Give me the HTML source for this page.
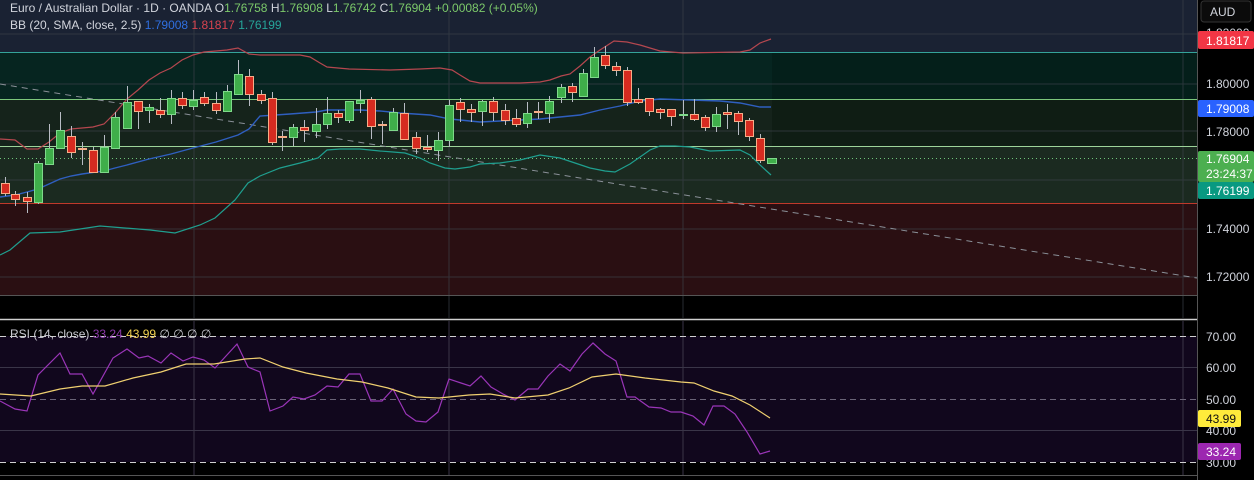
<!DOCTYPE html>
<html><head><meta charset="utf-8"><style>
html,body{margin:0;padding:0;background:#000;width:1254px;height:480px;overflow:hidden}
svg{display:block}
text{font-family:"Liberation Sans",sans-serif;font-size:12px}
</style></head><body>
<svg width="1254" height="480" viewBox="0 0 1254 480" xmlns="http://www.w3.org/2000/svg">
<!-- main pane backgrounds -->
<rect x="0" y="0" width="1197" height="318" fill="#000"/>
<rect x="0" y="0" width="1197" height="52" fill="#1a2233"/>
<rect x="0" y="52" width="772" height="47" fill="#062520"/>
<rect x="772" y="52" width="425" height="47" fill="#041f1a"/>
<rect x="0" y="99" width="772" height="47" fill="#15231b"/>
<rect x="772" y="99" width="425" height="47" fill="#0f1d14"/>
<rect x="0" y="146" width="1197" height="57" fill="#1b2a20"/>
<rect x="0" y="203" width="1197" height="92" fill="#2a0f12"/>
<!-- grid -->
<g stroke="#3a4048" stroke-width="1" opacity="0.7">
<line x1="0" y1="84" x2="1197" y2="84"/><line x1="0" y1="131" x2="1197" y2="131"/>
<line x1="0" y1="180" x2="1197" y2="180"/><line x1="0" y1="229" x2="1197" y2="229"/>
<line x1="0" y1="277" x2="1197" y2="277"/><line x1="0" y1="34" x2="1197" y2="34"/>
<line x1="194" y1="0" x2="194" y2="318"/><line x1="449" y1="0" x2="449" y2="318"/>
<line x1="683" y1="0" x2="683" y2="318"/><line x1="1183" y1="0" x2="1183" y2="318"/>
</g>
<!-- zone lines -->
<line x1="0" y1="52.5" x2="1197" y2="52.5" stroke="#34a39a"/>
<line x1="0" y1="99.5" x2="1197" y2="99.5" stroke="#7cc77c"/>
<line x1="0" y1="146.5" x2="1197" y2="146.5" stroke="#9dd49a"/>
<line x1="0" y1="203.5" x2="1197" y2="203.5" stroke="#c0392b"/>
<line x1="0" y1="295.5" x2="1197" y2="295.5" stroke="#555"/>
<line x1="0" y1="158.5" x2="1197" y2="158.5" stroke="#6fc47a" stroke-dasharray="1 3"/>
<!-- trend line -->
<line x1="0" y1="84" x2="1197" y2="278" stroke="#8a9098" stroke-width="1" stroke-dasharray="6 5"/>
<!-- BB -->
<polyline fill="none" stroke="#b5474f" stroke-width="1.2" points="0,139 15,140 27,149 38,149 49,142 60,133 71,129 82,128 93,127 104,124 115,113 127,99 138,90 149,80 160,73 171,68 182,60 193,55 204,52 216,51 227,50 238,48 249,54 260,55 300,55 310,57 320,63 327,67 349,69 390,70 420,69 440,68 452,70 460,75 470,81 480,83 520,83 540,82 550,80 561,76 570,74 580,66 590,57 600,50 614,41 627,42 640,45 660,51 683,53 740,52 750,50 760,43 771,39"/>
<polyline fill="none" stroke="#2f5fc0" stroke-width="1.4" points="0,197 15,195 27,192 38,189 49,184 60,179 71,176 82,174 104,171 115,168 127,165 149,159 171,154 193,148 216,142 238,135 249,129 260,116 290,114 316,112 327,110 360,110 380,111 400,113 430,115 450,119 460,120 480,122 500,121 520,120 540,119 560,117 580,115 600,110 620,106 640,101 660,99 690,100 720,101 740,103 760,107 771,107"/>
<polyline fill="none" stroke="#1f9f8f" stroke-width="1.2" points="0,255 10,250 30,233 60,232 100,226 150,230 175,233 200,225 215,218 235,200 248,183 260,176 280,168 300,163 318,158 327,150 340,149 360,149 380,151 393,152 405,153 420,158 430,163 445,168 455,169 470,167 480,164 500,163 520,160 540,155 560,158 575,163 590,168 605,171 615,172 630,164 650,150 660,146 675,146 690,147 710,151 740,150 750,155 760,165 771,175"/>
<!-- wicks -->
<g stroke="#b8bcc4" stroke-width="1">
<line x1="5.5" y1="177" x2="5.5" y2="196"/><line x1="15.5" y1="191" x2="15.5" y2="206"/><line x1="27.5" y1="192" x2="27.5" y2="213"/><line x1="38.5" y1="161" x2="38.5" y2="204"/><line x1="49.5" y1="124" x2="49.5" y2="164"/><line x1="60.5" y1="112" x2="60.5" y2="148"/><line x1="71.5" y1="126" x2="71.5" y2="158"/><line x1="82.5" y1="142" x2="82.5" y2="165"/><line x1="93.5" y1="147" x2="93.5" y2="173"/><line x1="104.5" y1="135" x2="104.5" y2="172"/><line x1="115.5" y1="112" x2="115.5" y2="149"/><line x1="127.5" y1="86" x2="127.5" y2="128"/><line x1="138.5" y1="101" x2="138.5" y2="129"/><line x1="149.5" y1="104" x2="149.5" y2="123"/><line x1="160.5" y1="98" x2="160.5" y2="118"/><line x1="171.5" y1="90" x2="171.5" y2="124"/><line x1="182.5" y1="92" x2="182.5" y2="109"/><line x1="193.5" y1="90" x2="193.5" y2="110"/><line x1="204.5" y1="92" x2="204.5" y2="106"/><line x1="216.5" y1="92" x2="216.5" y2="114"/><line x1="227.5" y1="85" x2="227.5" y2="112"/><line x1="238.5" y1="60" x2="238.5" y2="94"/><line x1="249.5" y1="69" x2="249.5" y2="106"/><line x1="261.5" y1="90" x2="261.5" y2="104"/><line x1="272.5" y1="92" x2="272.5" y2="145"/><line x1="282.5" y1="131" x2="282.5" y2="151"/><line x1="293.5" y1="124" x2="293.5" y2="146"/><line x1="304.5" y1="120" x2="304.5" y2="142"/><line x1="316.5" y1="108" x2="316.5" y2="138"/><line x1="327.5" y1="97" x2="327.5" y2="129"/><line x1="338.5" y1="110" x2="338.5" y2="123"/><line x1="349.5" y1="101" x2="349.5" y2="123"/><line x1="360.5" y1="90" x2="360.5" y2="113"/><line x1="371.5" y1="97" x2="371.5" y2="139"/><line x1="382.5" y1="121" x2="382.5" y2="144"/><line x1="393.5" y1="108" x2="393.5" y2="130"/><line x1="404.5" y1="103" x2="404.5" y2="139"/><line x1="416.5" y1="132" x2="416.5" y2="154"/><line x1="427.5" y1="135" x2="427.5" y2="152"/><line x1="438.5" y1="132" x2="438.5" y2="161"/><line x1="449.5" y1="100" x2="449.5" y2="147"/><line x1="460.5" y1="98" x2="460.5" y2="122"/><line x1="471.5" y1="104" x2="471.5" y2="122"/><line x1="482.5" y1="100" x2="482.5" y2="126"/><line x1="493.5" y1="97" x2="493.5" y2="121"/><line x1="505.5" y1="104" x2="505.5" y2="125"/><line x1="516.5" y1="109" x2="516.5" y2="127"/><line x1="527.5" y1="102" x2="527.5" y2="128"/><line x1="538.5" y1="102" x2="538.5" y2="119"/><line x1="549.5" y1="96" x2="549.5" y2="123"/><line x1="561.5" y1="84" x2="561.5" y2="103"/><line x1="572.5" y1="83" x2="572.5" y2="102"/><line x1="583.5" y1="69" x2="583.5" y2="96"/><line x1="594.5" y1="47" x2="594.5" y2="77"/><line x1="605.5" y1="46" x2="605.5" y2="69"/><line x1="616.5" y1="62" x2="616.5" y2="76"/><line x1="627.5" y1="67" x2="627.5" y2="106"/><line x1="638.5" y1="88" x2="638.5" y2="104"/><line x1="649.5" y1="98" x2="649.5" y2="116"/><line x1="660.5" y1="108" x2="660.5" y2="119"/><line x1="671.5" y1="109" x2="671.5" y2="126"/><line x1="683.5" y1="100" x2="683.5" y2="119"/><line x1="694.5" y1="99" x2="694.5" y2="121"/><line x1="705.5" y1="115" x2="705.5" y2="131"/><line x1="716.5" y1="107" x2="716.5" y2="132"/><line x1="727.5" y1="104" x2="727.5" y2="129"/><line x1="738.5" y1="111" x2="738.5" y2="135"/><line x1="749.5" y1="118" x2="749.5" y2="141"/><line x1="760.5" y1="134" x2="760.5" y2="163"/>
</g>
<!-- green bodies -->
<g fill="#3fae4a" stroke="#7ed98a" stroke-width="1">
<rect x="34.5" y="163.5" width="8" height="39"/><rect x="45.5" y="148.5" width="8" height="16"/><rect x="56.5" y="130.5" width="8" height="18"/><rect x="100.5" y="147.5" width="8" height="25"/><rect x="111.5" y="117.5" width="8" height="31"/><rect x="123.5" y="102.5" width="8" height="26"/><rect x="145.5" y="107.5" width="8" height="3"/><rect x="167.5" y="98.5" width="8" height="16"/><rect x="189.5" y="100.5" width="8" height="6"/><rect x="223.5" y="91.5" width="8" height="20"/><rect x="234.5" y="74.5" width="8" height="20"/><rect x="289.5" y="127.5" width="8" height="10"/><rect x="312.5" y="124.5" width="8" height="7"/><rect x="323.5" y="113.5" width="8" height="11"/><rect x="345.5" y="101.5" width="8" height="19"/><rect x="356.5" y="100.5" width="8" height="3"/><rect x="389.5" y="112.5" width="8" height="18"/><rect x="434.5" y="140.5" width="8" height="10"/><rect x="445.5" y="105.5" width="8" height="35"/><rect x="478.5" y="101.5" width="8" height="10"/><rect x="523.5" y="113.5" width="8" height="10"/><rect x="545.5" y="101.5" width="8" height="12"/><rect x="557.5" y="87.5" width="8" height="10"/><rect x="579.5" y="73.5" width="8" height="23"/><rect x="590.5" y="57.5" width="8" height="20"/><rect x="712.5" y="114.5" width="8" height="12"/><rect x="767.5" y="158.5" width="9" height="5"/>
</g>
<!-- red bodies -->
<g fill="#d62b20" stroke="#f6ad88" stroke-width="1">
<rect x="1.5" y="183.5" width="8" height="10"/><rect x="11.5" y="194.5" width="8" height="5"/><rect x="23.5" y="197.5" width="8" height="4"/><rect x="67.5" y="136.5" width="8" height="16"/><rect x="89.5" y="150.5" width="8" height="22"/><rect x="134.5" y="101.5" width="8" height="10"/><rect x="156.5" y="110.5" width="8" height="4"/><rect x="178.5" y="98.5" width="8" height="7"/><rect x="200.5" y="97.5" width="8" height="6"/><rect x="212.5" y="103.5" width="8" height="7"/><rect x="245.5" y="76.5" width="8" height="18"/><rect x="257.5" y="94.5" width="8" height="6"/><rect x="268.5" y="98.5" width="8" height="44"/><rect x="300.5" y="127.5" width="8" height="3"/><rect x="334.5" y="113.5" width="8" height="4"/><rect x="367.5" y="99.5" width="8" height="27"/><rect x="400.5" y="113.5" width="8" height="26"/><rect x="412.5" y="137.5" width="8" height="11"/><rect x="423.5" y="147.5" width="8" height="2"/><rect x="456.5" y="102.5" width="8" height="7"/><rect x="467.5" y="109.5" width="8" height="3"/><rect x="489.5" y="101.5" width="8" height="11"/><rect x="501.5" y="110.5" width="8" height="10"/><rect x="512.5" y="118.5" width="8" height="6"/><rect x="568.5" y="86.5" width="8" height="6"/><rect x="601.5" y="55.5" width="8" height="10"/><rect x="612.5" y="66.5" width="8" height="4"/><rect x="623.5" y="70.5" width="8" height="32"/><rect x="634.5" y="99.5" width="8" height="3"/><rect x="645.5" y="98.5" width="8" height="13"/><rect x="656.5" y="109.5" width="8" height="3"/><rect x="667.5" y="109.5" width="8" height="7"/><rect x="690.5" y="114.5" width="8" height="5"/><rect x="701.5" y="117.5" width="8" height="10"/><rect x="723.5" y="112.5" width="8" height="2"/><rect x="734.5" y="113.5" width="8" height="8"/><rect x="745.5" y="120.5" width="8" height="16"/><rect x="756.5" y="138.5" width="8" height="22"/>
</g>
<!-- dojis -->
<g stroke="#f6ad88" stroke-width="2">
<line x1="78" y1="149" x2="87" y2="149"/><line x1="278" y1="137" x2="287" y2="137"/><line x1="378" y1="125" x2="387" y2="125"/><line x1="534" y1="112" x2="543" y2="112"/>
</g>
<line x1="679" y1="115" x2="688" y2="115" stroke="#7ed98a" stroke-width="2"/>
<!-- legend -->
<text x="10" y="12" fill="#d1d4dc">Euro / Australian Dollar · 1D · OANDA <tspan fill="#d1d4dc">O</tspan><tspan fill="#7cc96a">1.76758</tspan> H<tspan fill="#7cc96a">1.76908</tspan> L<tspan fill="#7cc96a">1.76742</tspan> C<tspan fill="#7cc96a">1.76904</tspan> <tspan fill="#7cc96a">+0.00082 (+0.05%)</tspan></text>
<text x="10" y="29" fill="#d1d4dc">BB (20, SMA, close, 2.5) <tspan fill="#2f6fe0">1.79008</tspan> <tspan fill="#d8434f">1.81817</tspan> <tspan fill="#26a69a">1.76199</tspan></text>

<!-- separator -->
<rect x="0" y="318" width="1254" height="3" fill="#000"/>
<line x1="0" y1="319.5" x2="1254" y2="319.5" stroke="#d0d0d0" stroke-width="1.5"/>
<!-- RSI pane -->
<rect x="0" y="321" width="1197" height="154" fill="#000"/>
<rect x="0" y="336" width="1197" height="126" fill="#11071d"/>
<g stroke="#3a3548" stroke-width="1">
<line x1="0" y1="367.5" x2="1197" y2="367.5"/><line x1="0" y1="430.5" x2="1197" y2="430.5"/>
<line x1="194" y1="321" x2="194" y2="475"/><line x1="449" y1="321" x2="449" y2="475"/><line x1="683" y1="321" x2="683" y2="475"/><line x1="1183" y1="321" x2="1183" y2="475"/>
</g>
<g stroke="#d0d0d0" stroke-dasharray="6 4" stroke-width="1">
<line x1="0" y1="336.5" x2="1197" y2="336.5"/><line x1="0" y1="462.5" x2="1197" y2="462.5"/>
</g>
<line x1="0" y1="399.5" x2="1197" y2="399.5" stroke="#6a6478" stroke-dasharray="6 4"/>
<polyline fill="none" stroke="#9a35b8" stroke-width="1.2" points="0,401 15,409 27,411 38,375 60,353 70,374 82,374 93,394 113,358 127,349 139,358 148,356 161,363 171,353 183,361 193,357 204,360 215,368 226,356 237,344 248,367 260,372 270,411 283,406 293,397 304,399 315,395 327,386 338,387 349,374 360,374 371,401 382,401 393,389 406,414 416,421 426,422 438,412 449,379 461,383 470,386 481,376 491,387 503,394 515,400 528,389 538,389 548,376 560,364 570,371 582,354 593,343 605,354 616,361 627,397 635,397 649,407 661,408 671,412 681,412 693,416 704,425 713,406 724,406 735,414 747,432 760,454 770,451"/>
<polyline fill="none" stroke="#f0d070" stroke-width="1.2" points="0,394 31,396 60,389 82,386 105,386 133,378 161,372 186,364 214,364 245,359 260,358 283,367 306,373 337,379 362,382 388,388 416,397 439,398 469,395 490,394 515,398 548,395 569,388 592,377 616,374 645,378 681,382 694,383 714,391 732,396 750,405 770,418"/>
<text x="10" y="338" fill="#c8c8d0">RSI (14, close) <tspan fill="#8a3aa8">33.24</tspan> <tspan fill="#f0d050">43.99</tspan> <tspan fill="#c8c8d0">∅ ∅ ∅ ∅</tspan></text>
<line x1="0" y1="475.5" x2="1254" y2="475.5" stroke="#555" stroke-width="1"/>

<!-- price scale -->
<rect x="1197" y="0" width="57" height="480" fill="#000"/>
<line x1="1197.5" y1="0" x2="1197.5" y2="480" stroke="#555"/>
<rect x="1201" y="1" width="50" height="21" rx="3" fill="#0b0b0b" stroke="#333"/>
<text x="1210" y="16" fill="#d1d4dc">AUD</text>
<text x="1206" y="37" fill="#d1d4dc">1.82000</text>
<rect x="1198" y="31" width="56" height="18" rx="2" fill="#f23645"/>
<text x="1206" y="45" fill="#fff">1.81817</text>
<text x="1206" y="88" fill="#d1d4dc">1.80000</text>
<rect x="1198" y="100" width="56" height="17" rx="2" fill="#2962ff"/>
<text x="1206" y="113" fill="#fff">1.79008</text>
<text x="1206" y="136" fill="#d1d4dc">1.78000</text>
<rect x="1198" y="151" width="56" height="31" rx="2" fill="#4caf50"/>
<text x="1206" y="163" fill="#fff">1.76904</text>
<text x="1206" y="178" fill="#fff">23:24:37</text>
<rect x="1198" y="182" width="56" height="17" rx="2" fill="#089981"/>
<text x="1206" y="195" fill="#fff">1.76199</text>
<text x="1206" y="233" fill="#d1d4dc">1.74000</text>
<text x="1206" y="281" fill="#d1d4dc">1.72000</text>
<text x="1206" y="341" fill="#d1d4dc">70.00</text>
<text x="1206" y="372" fill="#d1d4dc">60.00</text>
<text x="1206" y="404" fill="#d1d4dc">50.00</text>
<text x="1206" y="435" fill="#d1d4dc">40.00</text>
<text x="1206" y="467" fill="#d1d4dc">30.00</text>
<rect x="1198" y="410" width="43" height="17" rx="2" fill="#ffeb3b"/>
<text x="1206" y="423" fill="#111">43.99</text>
<rect x="1198" y="443" width="43" height="17" rx="2" fill="#9c27b0"/>
<text x="1206" y="456" fill="#fff">33.24</text>
</svg>
</body></html>
